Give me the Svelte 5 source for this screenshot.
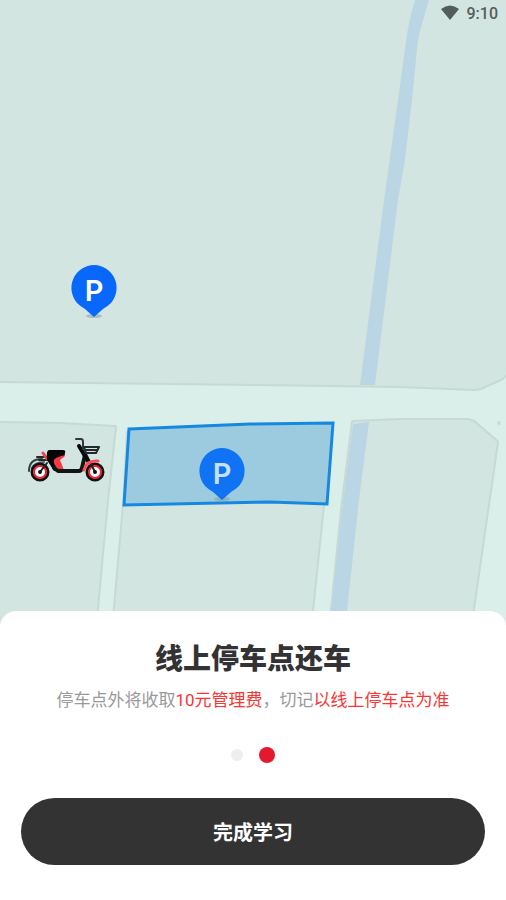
<script lang="ts">
  interface Pin {
    x: number;
    y: number;
    faded: boolean;
  }

  const pins: Pin[] = [
    { x: 94, y: 289, faded: false },
    { x: 222, y: 472, faded: true }
  ];

  // City blocks that the roads run between.
  const blocks = [
    'M-4 -4H510V366C507 374 504 378 499 380L485 386Q480 389 474 389L400 386L260 384L-4 381Z',
    'M-4 423L60 424L115 427L107 500L95 630H-4Z',
    'M128 432L326 428L323 505L310 630H113L124 505Z',
    'M353 422L400 420L468 420L474 422L497 442L496 449L470 630H330L342 510Z'
  ];

  const steps = 2;
  let current = $state(1);
  let finished = $state(false);
</script>

<main class="page">
  <section class="map" aria-label="停车点地图">
    <svg class="map-canvas" viewBox="0 0 506 625" preserveAspectRatio="xMidYMax slice" aria-hidden="true">
      <rect x="-500" y="-500" width="1506" height="1625" fill="#daeeea" />
      {#each blocks as d}
        <path class="block-edge" {d} />
        <path class="block" {d} />
      {/each}

      <path class="river" d="M416 -4H430L422 24Q418 36 417 50L412 100L405 160L398 200L375 385H360L384 200L398 100L407 34Q410 16 416 -4Z" />
      <path class="river" d="M353 424L369 422L359 500L345 630H329L342 510Z" />
      <circle cx="499" cy="423" r="2" fill="#c8dcd7" />

      <path class="zone" d="M129 429L250 424L333 423L327 504L270 502L124 505Z" />

      {#each pins as pin}
        <g transform="translate({pin.x} {pin.y})">
          <ellipse cx="0" cy="27" rx="8" ry="2" fill="#82979b" opacity="0.5" />
          <path
            d="M0 -24A23 23 0 0 1 17 14Q14 17 9 20L0 28L-9 20Q-14 17 -17 14A23 23 0 0 1 0 -24Z"
            fill={pin.faded ? '#0f73f3' : '#0768fb'}
          />
          <text class="pin-label" class:faded={pin.faded} x="0" y="12">P</text>
        </g>
      {/each}

      <g class="bike" fill="none" stroke-linecap="round" stroke-linejoin="round">
        <path d="M29 471Q29 459 42 459" stroke="#354044" stroke-width="2" />
        <path d="M32 468Q35 462 44 462" stroke="#59666a" stroke-width="2" />
        <path d="M37 457H48M39 460H48" stroke="#23282b" stroke-width="2" />
        <path d="M43 453L47 459" stroke="#ec4650" stroke-width="3" />
        <circle cx="40" cy="472" r="8" fill="#fff" stroke="#111" stroke-width="3" />
        <circle cx="40" cy="472" r="6" stroke="#ef2532" stroke-width="2" />
        <circle cx="95" cy="472" r="8" fill="#fff" stroke="#111" stroke-width="3" />
        <circle cx="95" cy="472" r="6" stroke="#ef2532" stroke-width="2" />
        <path d="M40 472L47 463M95 472L90 462L86 454" stroke="#202426" stroke-width="2" />
        <circle cx="40" cy="472" r="2" fill="#111" />
        <circle cx="95" cy="472" r="2" fill="#111" />
        <path d="M55 456L65 454V456L60 460L64 470H57L52 462Z" fill="#fa3843" />
        <path d="M49 450H63Q66 450 65 453Q65 456 61 456L56 458Q53 460 54 463L58 471L54 471L47 460Q46 450 49 450Z" fill="#060606" />
        <path d="M54 468L58 471H79Q81 471 82 468L85 455" stroke="#111516" stroke-width="4" />
        <path d="M79 446L88 461" stroke="#080808" stroke-width="4" />
        <path d="M76 439H81Q83 439 83 442V449" stroke="#303a3e" stroke-width="2" />
        <path d="M84 447H99L96 453H86L84 447M85 450H97" stroke="#20292d" stroke-width="2" />
        <path d="M84 470Q86 460 98 461" stroke="#fb505b" stroke-width="3" />
      </g>
    </svg>

    <div class="status-bar">
      <svg width="20" height="16" viewBox="0 0 20 16" aria-hidden="true">
        <path d="M1 4Q10 -3 19 4L10 15Z" fill="#535d5a" />
      </svg>
      <time>9:10</time>
    </div>
  </section>

  <section class="sheet">
    <h1>线上停车点还车</h1>
    <p>停车点外将收取<em>10元管理费</em>，切记<em>以线上停车点为准</em></p>

    <div class="dots">
      {#each { length: steps } as _, i}
        <button
          class="dot"
          class:active={i === current}
          aria-label="第{i + 1}页"
          onclick={() => (current = i)}
        ></button>
      {/each}
    </div>

    <button class="finish" aria-pressed={finished} onclick={() => (finished = true)}>完成学习</button>
  </section>
</main>

<style>
  :global(body) {
    margin: 0;
    background: #fff;
  }

  .page {
    display: flex;
    flex-direction: column;
    min-height: 100vh;
    font-family: Roboto, "Noto Sans CJK SC", sans-serif;
  }

  .map {
    position: relative;
    flex: 1;
    min-height: 320px;
    overflow: hidden;
  }

  .map-canvas {
    position: absolute;
    inset: 0;
    width: 100%;
    height: 100%;
  }

  .block-edge {
    fill: none;
    stroke: #c7d9d4;
    stroke-width: 4;
    stroke-linejoin: round;
  }

  .block {
    fill: #d3e5e1;
  }

  .river {
    fill: #bad6e4;
  }

  .zone {
    fill: #9ccbdf;
    stroke: #1688df;
    stroke-width: 3;
  }

  .pin-label {
    fill: #fff;
    font-family: Inter, sans-serif;
    font-size: 29px;
    font-weight: 600;
    text-anchor: middle;
  }

  .pin-label.faded {
    fill: #c5e2f5;
  }

  .status-bar {
    position: relative;
    display: flex;
    align-items: center;
    justify-content: flex-end;
    gap: 7px;
    height: 26px;
    padding-right: 8px;
    color: #535d5a;
    font-size: 16px;
    font-weight: 500;
  }

  .sheet {
    position: relative;
    display: flex;
    flex-direction: column;
    align-items: center;
    margin-top: -14px;
    padding: 29px 21px 35px;
    border-radius: 16px 16px 0 0;
    background: #fff;
  }

  h1 {
    margin: 0 0 8px;
    color: #333;
    font-size: 28px;
    font-weight: 900;
    line-height: 40px;
  }

  p {
    margin: 0;
    color: #999;
    font-size: 17px;
    line-height: 24px;
    text-align: center;
  }

  em {
    color: #fb3434;
    font-style: normal;
  }

  .dots {
    display: flex;
    align-items: center;
    gap: 16px;
    height: 16px;
    margin: 35px 0;
  }

  .dot {
    width: 12px;
    height: 12px;
    padding: 0;
    border: none;
    border-radius: 50%;
    background: #eee;
    cursor: pointer;
  }

  .dot.active {
    width: 16px;
    height: 16px;
    background: #e6182d;
  }

  .finish {
    width: 100%;
    height: 67px;
    border: none;
    border-radius: 34px;
    background: #333;
    color: #fff;
    font-family: inherit;
    font-size: 20px;
    font-weight: 700;
    cursor: pointer;
  }
</style>
